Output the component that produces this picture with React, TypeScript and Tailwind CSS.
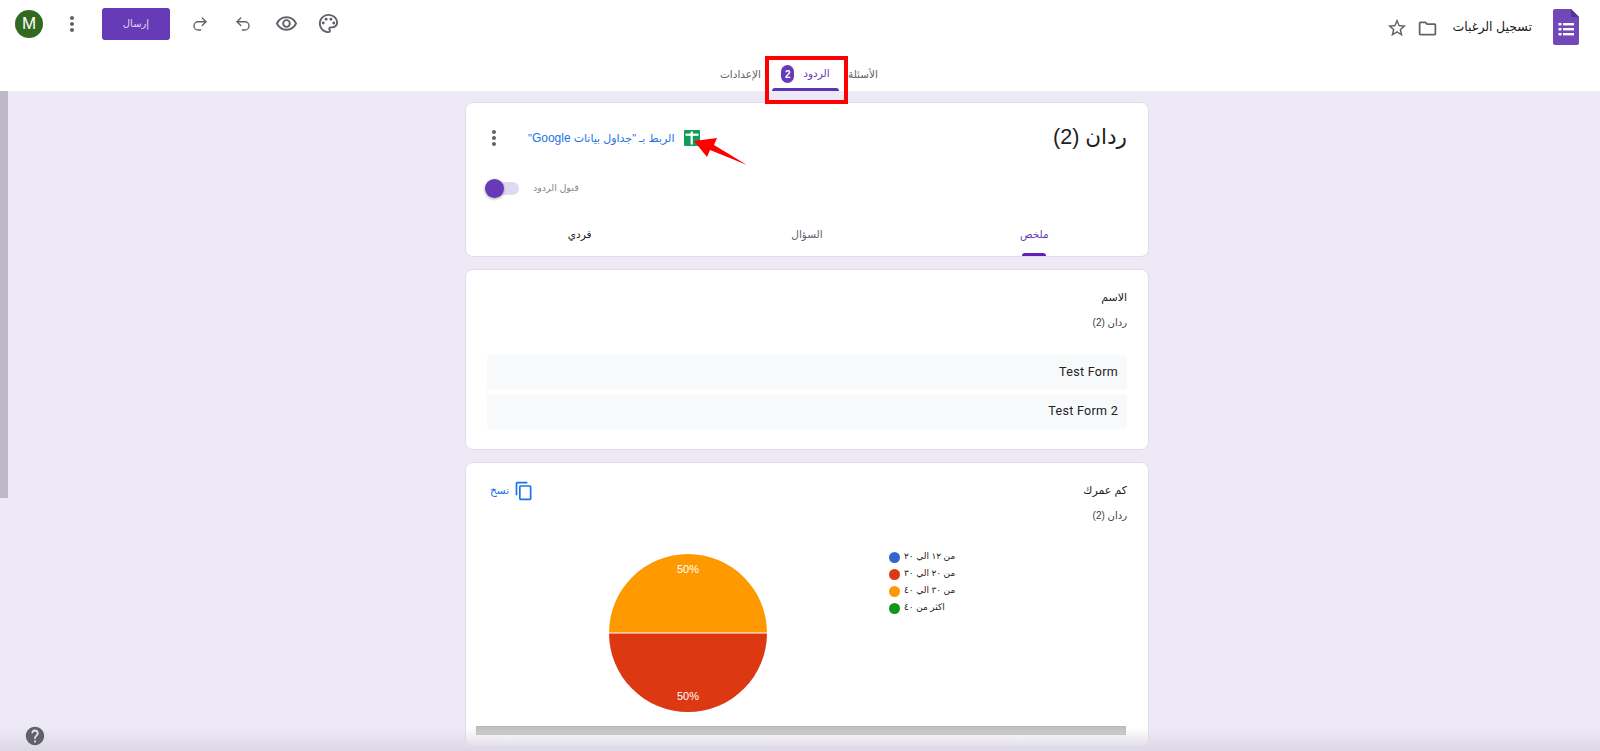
import {
  MdContentCopy,
  MdHelp,
  MdMoreVert,
  MdOutlineFolder,
  MdOutlinePalette,
  MdOutlineRemoveRedEye,
  MdStarBorder,
} from 'react-icons/md';
import { Redo2, Undo2 } from 'lucide-react';

const legend = [
  { label: 'من ١٢ الي ٢٠', color: 'bg-[#3366cc]' },
  { label: 'من ٢٠ الي ٣٠', color: 'bg-[#dc3912]' },
  { label: 'من ٣٠ الي ٤٠', color: 'bg-[#ff9900]' },
  { label: 'اكثر من ٤٠', color: 'bg-[#109618]' },
];

function FormsLogo() {
  return (
    <svg width="26" height="36" viewBox="0 0 26 36" className="shrink-0">
      <path d="M2 0h16l8 8v26a2 2 0 0 1-2 2H2a2 2 0 0 1-2-2V2a2 2 0 0 1 2-2z" fill="#7248b9" />
      <path d="M18 0l8 8h-8z" fill="#563495" />
      <g fill="#fff">
        <rect x="5.5" y="14" width="3" height="2.4" />
        <rect x="10" y="14" width="11" height="2.4" />
        <rect x="5.5" y="19" width="3" height="2.4" />
        <rect x="10" y="19" width="11" height="2.4" />
        <rect x="5.5" y="24" width="3" height="2.4" />
        <rect x="10" y="24" width="11" height="2.4" />
      </g>
    </svg>
  );
}

function SheetsIcon() {
  return (
    <svg width="16" height="16" viewBox="0 0 16 16" className="shrink-0">
      <rect width="16" height="16" rx="1" fill="#0f9d58" />
      <rect x="1.5" y="3.6" width="13" height="2.2" fill="#fff" />
      <rect x="6.6" y="1.5" width="2.2" height="13" fill="#fff" />
    </svg>
  );
}

function TopBar() {
  return (
    <div className="flex h-[54px] items-center pr-[21px] pl-[15px]">
      <FormsLogo />
      <span className="mr-[21px] text-[12.5px] text-[#202124]">تسجيل الرغبات</span>
      <MdOutlineFolder className="mt-[2px] mr-[15px] text-[#5f6368]" size={21} />
      <MdStarBorder className="mt-[2px] mr-[9px] text-[#5f6368]" size={22} />
      <div className="mr-auto mb-[7px] flex items-center">
        <MdOutlinePalette className="text-[#5f6368]" size={23} />
        <MdOutlineRemoveRedEye className="mr-[19px] text-[#5f6368]" size={23} />
        <Undo2 className="mr-[23px] text-[#5f6368]" size={18} strokeWidth={1.8} />
        <Redo2 className="mr-[25px] text-[#5f6368]" size={18} strokeWidth={1.8} />
        <button className="mr-[21px] h-[32px] w-[68px] rounded-[3px] bg-[#673ab7] text-[10px] text-[#e3d8f3]">إرسال</button>
        <MdMoreVert className="mr-[18px] text-[#5f6368]" size={24} />
        <div className="mr-[17px] flex h-[28px] w-[28px] items-center justify-center rounded-full bg-[#33691e] text-[17px] text-white">M</div>
      </div>
    </div>
  );
}

function FormTabs() {
  return (
    <div className="flex h-[37px] items-start justify-start pr-[722px]">
      <span className="mt-[13px] text-[10.5px] text-[#5f6368]">الأسئلة</span>
      <div className="mr-[9px] flex h-[37px] w-[67px] flex-col items-center">
        <div className="mt-[11px] flex items-center gap-[9px]">
          <span className="text-[10.5px] text-[#673ab7]">الردود</span>
          <span className="flex h-[18px] w-[13px] items-center justify-center rounded-full bg-[#673ab7] text-[10px] font-bold text-white">2</span>
        </div>
        <div className="mt-auto h-[3px] w-full rounded-t-[3px] bg-[#5e35b1]" />
      </div>
      <span className="mr-[11px] mt-[13px] text-[10.5px] text-[#5f6368]">الإعدادات</span>
    </div>
  );
}

function SummaryCard() {
  return (
    <section className="h-[155px] rounded-[8px] border border-[#e0dcea] bg-white">
      <div className="flex h-[69px] items-center pr-[21px] pl-[16px]">
        <h1 className="text-[21.5px] text-[#202124]">ردان (2)</h1>
        <div className="mr-auto flex items-center">
          <SheetsIcon />
          <span className="mr-[10px] text-[11px] text-[#1a73e8]">
            الربط بـ "جداول بيانات <span className="text-[12px]">Google</span>"
          </span>
          <MdMoreVert className="mr-[22px] text-[#5f6368]" size={24} />
        </div>
      </div>
      <div className="mt-[4px] flex h-[24px] items-center justify-end pl-[19px]">
        <span className="ml-[14px] text-[9.5px] text-[#80868b]">قبول الردود</span>
        <div className="relative h-[13px] w-[34px] rounded-full bg-[#e1d8f1]">
          <div className="absolute top-[-3px] left-0 h-[19px] w-[19px] rounded-full bg-[#673ab7] shadow-[0_1px_3px_rgba(0,0,0,0.35)]" />
        </div>
      </div>
      <div className="mt-[14px] grid h-[42px] grid-cols-3">
        <div className="relative flex justify-center pt-[13px]">
          <span className="text-[10.5px] text-[#673ab7]">ملخص</span>
          <div className="absolute bottom-0 h-[3px] w-[24px] rounded-t-[3px] bg-[#5e20b8]" />
        </div>
        <div className="flex justify-center pt-[13px] text-[10.5px] text-[#5f6368]">السؤال</div>
        <div className="flex justify-center pt-[13px] text-[10.5px] text-[#202124]">فردي</div>
      </div>
    </section>
  );
}

function NameCard() {
  return (
    <section className="h-[181px] rounded-[8px] border border-[#e0dcea] bg-white px-[21px] pt-[19px]">
      <h2 className="text-[11px] leading-[16px] text-[#202124]">الاسم</h2>
      <p className="mt-[10px] text-[10px] leading-[16px] text-[#3c4043]">ردان (2)</p>
      <div className="mt-[24px] flex flex-col gap-[4px] font-['Roboto',sans-serif]">
        <div className="flex h-[35px] items-center rounded-[4px] bg-[#f8f9fa] px-[9px] text-[12.5px] tracking-[0.3px] text-[#202124]">Test Form</div>
        <div className="flex h-[35px] items-center rounded-[4px] bg-[#f8f9fa] px-[9px] text-[12.5px] tracking-[0.3px] text-[#202124]">Test Form 2</div>
      </div>
    </section>
  );
}

function PieChart() {
  return (
    <svg width="160" height="160" viewBox="0 0 160 160" className="shrink-0">
      <path d="M1 80a79 79 0 0 1 158 0z" fill="#ff9900" />
      <path d="M1 80a79 79 0 0 0 158 0z" fill="#dc3912" />
      <line x1="1" y1="80" x2="159" y2="80" stroke="#fff" strokeWidth="1" />
      <text x="80" y="20" textAnchor="middle" fill="#fff" fontSize="11">50%</text>
      <text x="80" y="147" textAnchor="middle" fill="#fff" fontSize="11">50%</text>
    </svg>
  );
}

function AgeCard() {
  return (
    <section className="relative h-[285px] rounded-[8px] border border-[#e0dcea] bg-white">
      <div className="flex items-start px-[21px] pt-[18px]">
        <div>
          <h2 className="text-[11px] leading-[18px] text-[#202124]">كم عمرك</h2>
          <p className="mt-[9px] text-[10px] leading-[16px] text-[#3c4043]">ردان (2)</p>
        </div>
        <div className="mr-auto ml-[3px] flex items-center gap-[5px]">
          <MdContentCopy className="text-[#1a73e8]" size={20} />
          <span className="text-[10.5px] text-[#1a73e8]">نسخ</span>
        </div>
      </div>
      <div className="mt-[18px] flex items-start">
        <div dir="ltr" className="mr-[193px] mt-[9px] flex w-[66px] flex-col gap-[5px]">
          {legend.map((item) => (
            <div key={item.label} className="flex h-[12px] items-center gap-[4px]">
              <span className={`h-[11px] w-[11px] shrink-0 rounded-full ${item.color}`} />
              <span dir="rtl" className="text-[9px] whitespace-nowrap text-[#222222]">{item.label}</span>
            </div>
          ))}
        </div>
        <div className="mr-[121px] mt-[11px]">
          <PieChart />
        </div>
      </div>
      <div className="absolute right-[22px] bottom-[11px] left-[10px] h-[9px] border border-[#b9b9b9] bg-[#c1c1c1]" />
    </section>
  );
}

export default function App() {
  return (
    <div dir="rtl" className="relative h-[751px] w-[1600px] overflow-hidden bg-[#ede9f7] font-['Liberation_Sans','DejaVu_Sans',sans-serif]">
      <header className="h-[91px] bg-white">
        <TopBar />
        <FormTabs />
      </header>
      <main className="mt-[11px] mr-[451px] flex w-[684px] flex-col gap-[12px]">
        <SummaryCard />
        <NameCard />
        <AgeCard />
      </main>

      {/* left page scrollbar */}
      <div className="absolute top-[91px] left-0 h-[407px] w-[8px] bg-[#bdb9c8]" />

      {/* bottom edge shadow */}
      <div className="absolute right-0 bottom-0 left-0 h-[24px] bg-gradient-to-t from-[#dcd8e6] to-transparent" />
      <MdHelp className="absolute bottom-[4px] left-[24px] text-[#5f6368]" size={22} />

      {/* screenshot annotations */}
      <div className="absolute top-[56px] left-[765px] h-[48px] w-[83px] border-[4px] border-[#ff0000]" />
      <svg width="70" height="50" viewBox="0 0 70 50" className="absolute top-[128px] left-[690px]">
        <path d="M4 13 L27 10 L24 17 L57 37 L20 22 L17 29 Z" fill="#ff0000" />
      </svg>
    </div>
  );
}
